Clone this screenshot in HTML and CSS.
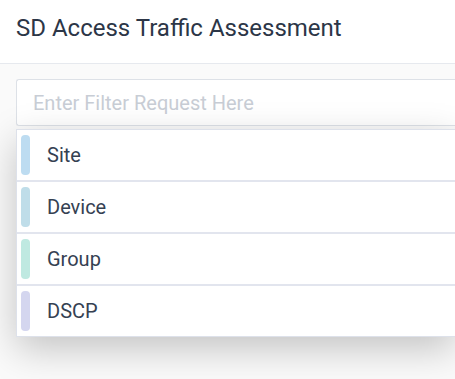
FILE: index.html
```html
<!DOCTYPE html>
<html lang="en">
<head>
    <meta charset="UTF-8">
    <meta name="viewport" content="width=device-width, initial-scale=1.0">
    <title>SD Access Traffic Assessment</title>
    <link rel="stylesheet" href="styles.css">
</head>
<body>
    <header class="page-header">
        <h1 class="title">SD Access Traffic Assessment</h1>
    </header>

    <div class="filter">
        <input class="filter-input" type="text" placeholder="Enter Filter Request Here">

        <ul class="filter-menu">
            <li class="filter-item"><span class="tag site"></span>Site</li>
            <li class="filter-item"><span class="tag device"></span>Device</li>
            <li class="filter-item"><span class="tag group"></span>Group</li>
            <li class="filter-item"><span class="tag dscp"></span>DSCP</li>
        </ul>
    </div>
</body>
</html>
```

FILE: styles.css
```css
html, body {
    height: 100%;
}
body {
    margin: 0;
    font-family: Roboto, "Liberation Sans", sans-serif;
    background: #fafafa;
    overflow: hidden;
}
.page-header {
    background: #fff;
    height: 64px;
    border-bottom: 1px solid #e6e9ee;
    box-sizing: border-box;
    padding: 14px 16px 0;
}
.title {
    margin: 0;
    font-size: 24px;
    line-height: 28px;
    font-weight: 400;
    color: #2c3647;
}
.filter {
    position: relative;
    padding: 15px 0 0 16px;
}
.filter-input {
    display: block;
    width: 100%;
    height: 47px;
    box-sizing: border-box;
    border: 1px solid #dde1e7;
    border-right: none;
    border-radius: 3px 0 0 3px;
    padding: 0 16px;
    font-family: inherit;
    font-size: 20px;
    background: #fff;
    outline: none;
}
.filter-input::placeholder {
    color: #c8cdd5;
}
.filter-menu {
    position: absolute;
    left: 16px;
    right: 0;
    top: 65px;
    margin: 0;
    padding: 0;
    list-style: none;
    background: #fff;
    border: 1px solid #dde1ea;
    border-right: none;
    box-shadow: 0 12px 36px rgba(0,0,0,0.22);
}
.filter-item {
    display: flex;
    align-items: center;
    height: 52px;
    box-sizing: border-box;
    padding: 5px 4px;
    border-bottom: 2px solid #e2e5ee;
    font-size: 20px;
    color: #354152;
}
.filter-item:last-child {
    height: 50px;
    border-bottom: none;
}
.tag {
    width: 9px;
    align-self: stretch;
    border-radius: 4px;
    margin-right: 17px;
}
.site { background: #bddcf1; }
.device { background: #bfdde9; }
.group { background: #bfe9e1; }
.dscp { background: #d4d6ef; }
```
